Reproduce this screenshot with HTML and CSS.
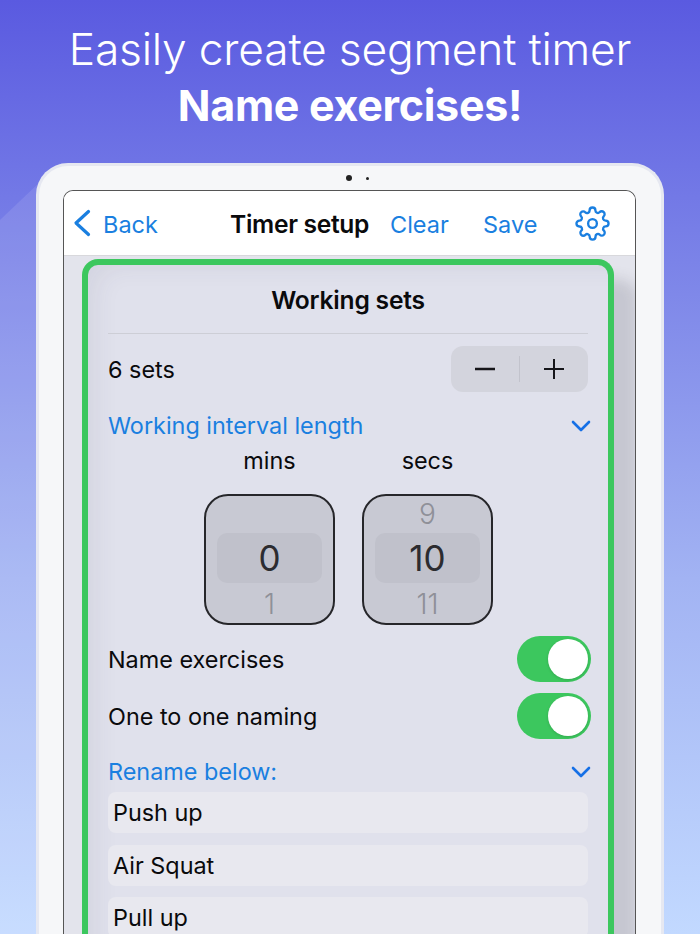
FILE: index.html
```html
<!DOCTYPE html>
<html lang="en">
<head>
<meta charset="utf-8">
<title>Timer setup</title>
<link rel="stylesheet" href="styles.css">
</head>
<body>
<main class="page">
  <svg class="decor" viewBox="0 0 700 934" aria-hidden="true"><polygon points="0,220 60,163 60,934 0,934"/></svg>
  <header class="headline">
    <h1>Easily create segment timer</h1>
    <h2>Name exercises!</h2>
  </header>
  <section class="device">
    <div class="camera"><span class="dot-big"></span><span class="dot-small"></span></div>
    <div class="screen">
      <nav class="nav">
        <a class="back">
          <svg class="back-icon" viewBox="0 0 18 28"><path d="M15.5 2.5 L3 14 L15.5 25.5"/></svg>
          <span>Back</span>
        </a>
        <strong class="nav-title">Timer setup</strong>
        <a class="nav-clear">Clear</a>
        <a class="nav-save">Save</a>
        <svg class="gear" viewBox="0 0 24 24"><circle cx="12" cy="12" r="3"/><path d="M19.4 15a1.65 1.65 0 0 0 .33 1.82l.06.06a2 2 0 0 1 0 2.83 2 2 0 0 1-2.83 0l-.06-.06a1.65 1.65 0 0 0-1.82-.33 1.65 1.65 0 0 0-1 1.51V21a2 2 0 0 1-2 2 2 2 0 0 1-2-2v-.09A1.65 1.65 0 0 0 9 19.4a1.65 1.65 0 0 0-1.82.33l-.06.06a2 2 0 0 1-2.83 0 2 2 0 0 1 0-2.83l.06-.06a1.65 1.65 0 0 0 .33-1.82 1.65 1.65 0 0 0-1.51-1H3a2 2 0 0 1-2-2 2 2 0 0 1 2-2h.09A1.65 1.65 0 0 0 4.6 9a1.65 1.65 0 0 0-.33-1.82l-.06-.06a2 2 0 0 1 0-2.83 2 2 0 0 1 2.83 0l.06.06a1.65 1.65 0 0 0 1.82.33H9a1.65 1.65 0 0 0 1-1.51V3a2 2 0 0 1 2-2 2 2 0 0 1 2 2v.09a1.65 1.65 0 0 0 1 1.51 1.65 1.65 0 0 0 1.82-.33l.06-.06a2 2 0 0 1 2.83 0 2 2 0 0 1 0 2.83l-.06.06a1.65 1.65 0 0 0-.33 1.82V9a1.65 1.65 0 0 0 1.51 1H21a2 2 0 0 1 2 2 2 2 0 0 1-2 2h-.09a1.65 1.65 0 0 0-1.51 1z"/></svg>
      </nav>
      <div class="content">
        <div class="card">
          <h3 class="card-title">Working sets</h3>
          <div class="row sets-row">
            <span>6 sets</span>
            <div class="stepper">
              <svg class="minus" viewBox="0 0 22 22"><path d="M1 11 H21"/></svg>
              <i class="stepper-sep"></i>
              <svg viewBox="0 0 22 22"><path d="M1 11 H21 M11 1 V21"/></svg>
            </div>
          </div>
          <div class="row link-row interval-row">
            <span>Working interval length</span>
            <svg class="chev" viewBox="0 0 20 12"><path d="M2 2 L10 10 L18 2"/></svg>
          </div>
          <div class="wheels">
            <div class="wheel-col">
              <span class="wheel-label">mins</span>
              <div class="wheel">
                <span class="wheel-num dim"></span>
                <span class="wheel-num current">0</span>
                <span class="wheel-num dim">1</span>
              </div>
            </div>
            <div class="wheel-col">
              <span class="wheel-label">secs</span>
              <div class="wheel">
                <span class="wheel-num dim">9</span>
                <span class="wheel-num current">10</span>
                <span class="wheel-num dim">11</span>
              </div>
            </div>
          </div>
          <div class="row toggle-row first-toggle"><span>Name exercises</span><span class="toggle"><i></i></span></div>
          <div class="row toggle-row second-toggle"><span>One to one naming</span><span class="toggle"><i></i></span></div>
          <div class="row link-row rename-row">
            <span>Rename below:</span>
            <svg class="chev" viewBox="0 0 20 12"><path d="M2 2 L10 10 L18 2"/></svg>
          </div>
          <div class="names">
            <div class="name">Push up</div>
            <div class="name">Air Squat</div>
            <div class="name">Pull up</div>
          </div>
        </div>
      </div>
    </div>
  </section>
</main>
</body>
</html>
```
FILE: styles.css
```css
* { box-sizing: border-box; margin: 0; padding: 0; }
html, body { width: 700px; height: 934px; overflow: hidden; }
body { font-family: Inter, "Noto Sans", sans-serif; color: #0a0a0c; }

.page {
  position: relative;
  width: 700px;
  height: 934px;
  overflow: hidden;
  padding-top: 21px;
  background: linear-gradient(180deg, #5a5ae0 0%, #7b83e8 28%, #a2b3f3 62%, #c2d9ff 100%);
}
.decor { position: absolute; inset: 0; width: 700px; height: 934px; }
.decor polygon { fill: rgba(255, 255, 255, .1); }

.headline { position: relative; text-align: center; color: #fff; height: 142px; }
.headline h1 { font-size: 44.3px; line-height: 56px; font-weight: 300; letter-spacing: -.2px; white-space: nowrap; }
.headline h2 { font-size: 43px; line-height: 56px; font-weight: 700; letter-spacing: -.3px; }

.device {
  position: relative;
  width: 628px;
  height: 790px;
  margin-left: 36px;
  padding: 0 25px 0 24px;
  background: #f6f7f9;
  border: 3px solid #e6e8f1;
  border-bottom: 0;
  border-radius: 32px 32px 0 0;
}
.camera { display: flex; align-items: center; height: 24px; padding-left: 283px; gap: 13.5px; }
.dot-big { width: 6px; height: 6px; border-radius: 50%; background: #222; }
.dot-small { width: 3px; height: 3px; border-radius: 50%; background: #222; }

.screen {
  height: 770px;
  border: 1px solid #555;
  border-bottom: 0;
  border-radius: 10px 10px 0 0;
  overflow: hidden;
  background: #e3e4ec;
}

.nav {
  display: flex;
  align-items: center;
  height: 65px;
  background: #fff;
  color: #1a7fe0;
  font-size: 23.5px;
  padding: 2px 0 0 9px;
  border-bottom: 1px solid #d8d8dc;
}
.back { display: flex; align-items: center; gap: 12px; width: 157px; }
.back-icon { width: 18px; height: 28px; margin-top: -2px; fill: none; stroke: #1a7fe0; stroke-width: 3.2; stroke-linecap: round; stroke-linejoin: round; }
.nav-title { font-size: 24.6px; font-weight: 600; color: #0a0a0c; letter-spacing: -.3px; width: 160px; white-space: nowrap; }
.nav-clear { width: 93px; }
.nav-save { width: 92px; }
.gear { width: 35px; height: 35px; margin: -2px 0 0 0; fill: none; stroke: #1a7fe0; stroke-width: 1.6; stroke-linejoin: round; }

.content { height: 700px; padding: 3px 21px 0 18px; }
.card {
  height: 700px;
  border: 6px solid #3cc75e;
  border-bottom: 0;
  border-radius: 16px 16px 0 0;
  background: #e0e1ec;
  padding: 0 20px;
  box-shadow: 20px 24px 14px 4px rgba(60, 60, 80, .17), inset 22px 16px 24px -14px rgba(60, 60, 90, .07);
  font-size: 23.4px;
}
.card-title {
  font-size: 24.6px;
  font-weight: 600;
  text-align: center;
  height: 69px;
  line-height: 71px;
  border-bottom: 1px solid #cdced6;
  letter-spacing: -.2px;
}
.row { display: flex; align-items: center; justify-content: space-between; }
.sets-row { height: 46px; margin-top: 12px; }
.stepper {
  display: flex;
  align-items: center;
  justify-content: space-between;
  width: 137px;
  height: 46px;
  padding: 0 23px;
  border-radius: 12px;
  background: #d3d4dd;
}
.stepper svg { width: 22px; height: 22px; fill: none; stroke: #16161a; stroke-width: 2; }
.stepper .minus { stroke-width: 2.5; }
.stepper-sep { width: 1px; height: 26px; background: #c2c3cc; }

.link-row { color: #1a7fe0; }
.interval-row { height: 30px; margin-top: 18px; }
.rename-row { height: 26px; margin-top: 19px; }
.chev { width: 20px; height: 12px; margin: 2px -3px 0 0; fill: none; stroke: #1670e6; stroke-width: 2.6; stroke-linecap: round; stroke-linejoin: round; flex: none; }

.wheels { display: flex; justify-content: flex-start; gap: 27px; padding-left: 96px; margin-top: 8px; }
.wheel-col { display: flex; flex-direction: column; align-items: center; width: 131px; }
.wheel-label { height: 46px; line-height: 26px; }
.wheel {
  display: flex;
  flex-direction: column;
  align-items: center;
  width: 131px;
  height: 131px;
  padding-top: 2px;
  border: 2px solid #26262a;
  border-radius: 24px;
  background: #c8c9d3;
}
.wheel-num { display: block; text-align: center; }
.wheel-num.dim { height: 37px; line-height: 33px; font-size: 28px; color: #8f9098; width: 100%; font-weight: 300; }
.wheel-num.current { width: 105px; height: 50px; line-height: 50px; font-size: 35px; color: #2c2c30; background: #c0c1cb; border-radius: 10px; font-weight: 400; }
.wheel-num.current + .dim { margin-top: 5px; }

.toggle-row { height: 46px; margin-right: -3px; }
.first-toggle { margin-top: 11px; }
.second-toggle { margin-top: 11px; }
.toggle {
  position: relative;
  display: block;
  width: 74px;
  height: 46px;
  border-radius: 23px;
  background: #3cc75e;
}
.toggle i {
  position: absolute;
  top: 3px;
  right: 3px;
  width: 40px;
  height: 40px;
  border-radius: 50%;
  background: #fff;
  box-shadow: 0 1px 3px rgba(0, 0, 0, .15);
}

.names { display: flex; flex-direction: column; gap: 11.5px; margin-top: 8px; }
.name {
  flex: none;
  height: 41px;
  line-height: 41px;
  padding-left: 5px;
  border-radius: 8px;
  background: #e8e8ef;
}
```
